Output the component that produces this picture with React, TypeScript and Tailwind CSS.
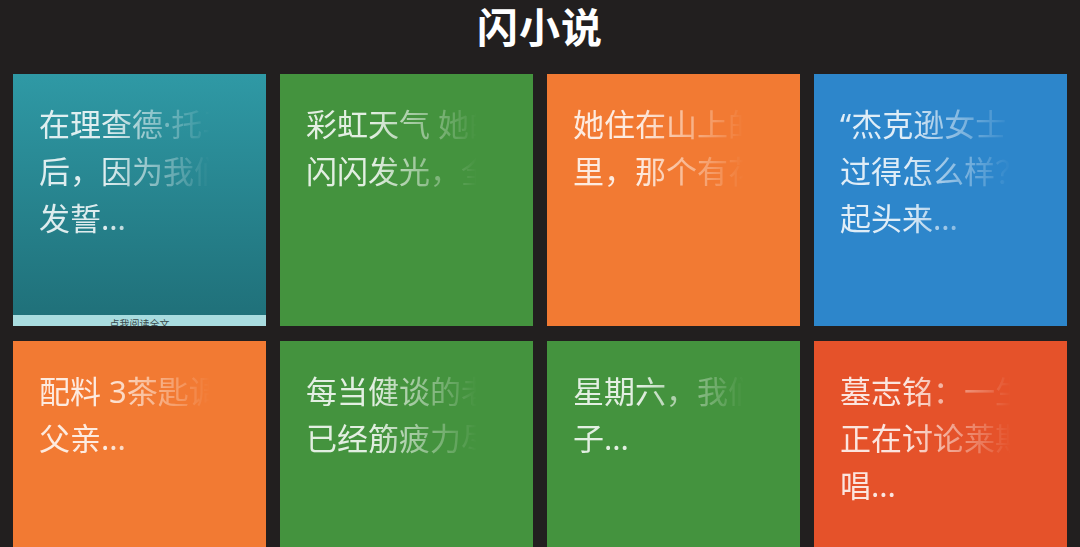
import React from "react";

interface Story {
  id: number;
  lines: string[];
  bg: string;
  footer?: string;
}

const STORIES: Story[] = [
  { id: 1, lines: ["在理查德·托马斯去世", "后，因为我们曾经", "发誓..."], bg: "bg-gradient-to-b from-[#2f99a5] to-[#1f6f78]", footer: "点我阅读全文" },
  { id: 2, lines: ["彩虹天气 她的眼睛", "闪闪发光，全世界"], bg: "bg-[#44933e]" },
  { id: 3, lines: ["她住在山上的小屋", "里，那个有花的"], bg: "bg-[#f27a33]" },
  { id: 4, lines: ["“杰克逊女士，你", "过得怎么样？”她抬", "起头来..."], bg: "bg-[#2d86cb]" },
  { id: 5, lines: ["配料 3茶匙调味的", "父亲..."], bg: "bg-[#f27a33]" },
  { id: 6, lines: ["每当健谈的老人们", "已经筋疲力尽的时候"], bg: "bg-[#44933e]" },
  { id: 7, lines: ["星期六，我们去", "子..."], bg: "bg-[#44933e]" },
  { id: 8, lines: ["墓志铭：一生的", "正在讨论莱斯特的", "唱..."], bg: "bg-[#e5522a]" },
];

function StoryCard({ story }: { story: Story }) {
  return (
    <div className={`relative h-[252px] overflow-hidden flex flex-col ${story.bg}`}>
      <div className="flex-1 pl-[26px] pt-[27px]">
        <div className="w-[190px] overflow-hidden text-[31px] leading-[47px] text-white/85 [mask-image:linear-gradient(to_right,black_35%,transparent_90%)]">
          {story.lines.map((line, i) => (
            <div key={i} className="whitespace-nowrap">{line}</div>
          ))}
        </div>
      </div>
      {story.footer && (
        <div className="h-[11px] overflow-hidden bg-[#a9dcdf] text-center text-[10px] leading-[12px] pt-[3px] text-[#3a4a4c]">
          {story.footer}
        </div>
      )}
    </div>
  );
}

export default function App() {
  return (
    <div className="min-h-[547px] bg-[#221f1f] overflow-hidden" style={{ fontFamily: '"Noto Sans", "Noto Sans CJK SC", sans-serif' }}>
      <div className="h-[74px] flex justify-center pt-[4px]">
        <h1 className="text-white text-[41px] leading-[46px] font-bold tracking-[1px]">闪小说</h1>
      </div>
      <div className="grid grid-cols-4 gap-x-[14px] gap-y-[15px] px-[13px]">
        {STORIES.map(s => <StoryCard key={s.id} story={s} />)}
      </div>
    </div>
  );
}
